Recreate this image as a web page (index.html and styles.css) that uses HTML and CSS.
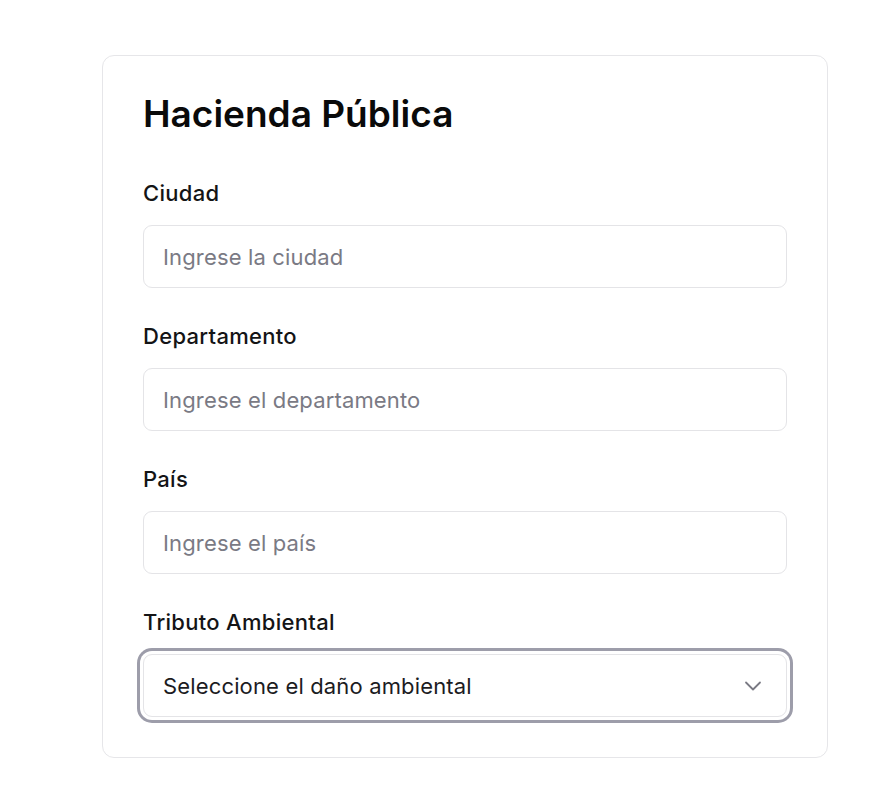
FILE: index.html
```html
<!DOCTYPE html>
<html lang="es">
<head>
<meta charset="utf-8">
<title>Hacienda Pública</title>
<link rel="stylesheet" href="styles.css">
</head>
<body>
<div class="card">
  <h1 class="card-title">Hacienda Pública</h1>
  <form class="form">
    <div class="field">
      <label class="label" for="ciudad">Ciudad</label>
      <input class="input" id="ciudad" type="text" placeholder="Ingrese la ciudad">
    </div>
    <div class="field">
      <label class="label" for="depto">Departamento</label>
      <input class="input" id="depto" type="text" placeholder="Ingrese el departamento">
    </div>
    <div class="field">
      <label class="label" for="pais">País</label>
      <input class="input" id="pais" type="text" placeholder="Ingrese el país">
    </div>
    <div class="field">
      <label class="label" for="tributo">Tributo Ambiental</label>
      <button class="select" id="tributo" type="button">
        <span class="select-value">Seleccione el daño ambiental</span>
        <svg class="chevron" width="18" height="10" viewBox="0 0 18 10" fill="none" stroke="currentColor" stroke-width="1.8" stroke-linecap="round" stroke-linejoin="round"><path d="M2 1.5 9 8.5 16 1.5"/></svg>
      </button>
    </div>
  </form>
</div>
</body>
</html>
```

FILE: styles.css
```css
* {
  box-sizing: border-box;
}

html, body {
  margin: 0;
  padding: 0;
  background: #ffffff;
}

body {
  font-family: Inter, "Noto Sans", "Liberation Sans", sans-serif;
  color: #09090b;
  padding: 55px 0 0 102px;
}

.card {
  width: 726px;
  border: 1px solid #e6e6e9;
  border-radius: 12px;
  background: #ffffff;
  padding: 40px;
}

.card-title {
  margin: 0;
  font-size: 37px;
  line-height: 36px;
  font-weight: 600;
  letter-spacing: 0;
  color: #0a0a0a;
}

.form {
  margin-top: 51px;
  display: flex;
  flex-direction: column;
  gap: 38px;
}

.field {
  display: flex;
  flex-direction: column;
  gap: 21px;
}

.label {
  font-size: 22px;
  line-height: 21px;
  font-weight: 500;
  letter-spacing: 0.3px;
  color: #141416;
}

.input {
  display: block;
  width: 100%;
  height: 63px;
  border: 1px solid #e4e4e7;
  border-radius: 9px;
  padding: 0 19px;
  font-family: inherit;
  font-size: 22px;
  letter-spacing: 0.15px;
  color: #09090b;
  background: #ffffff;
  outline: none;
}

.input::placeholder {
  color: #7a7a84;
}

.select {
  display: flex;
  align-items: center;
  justify-content: space-between;
  width: 100%;
  height: 63px;
  border: 1px solid #e4e4e7;
  border-radius: 9px;
  padding: 0 24px 0 19px;
  font-family: inherit;
  font-size: 22px;
  letter-spacing: 0.15px;
  color: #1c1c1f;
  background: #ffffff;
  box-shadow: 0 0 0 3px #ffffff, 0 0 0 6px #9d9daa;
  text-align: left;
  cursor: pointer;
}

.chevron {
  color: #7a7a84;
  flex: none;
}
```
